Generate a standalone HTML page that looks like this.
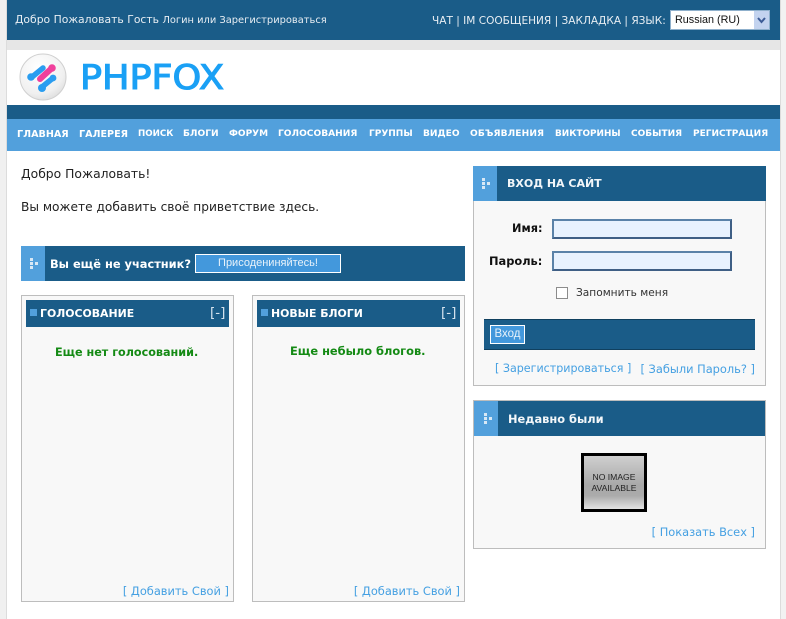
<!DOCTYPE html>
<html><head><meta charset="utf-8"><style>
html,body{margin:0;padding:0;background:#fff}
body{width:786px;height:619px;position:relative;overflow:hidden;font-family:"DejaVu Sans","Liberation Sans",sans-serif;font-size:11px;color:#222}
.a{position:absolute;white-space:nowrap}
.d{background:#1a5c88}
.l{background:#52a0dc}
.box{position:absolute;box-sizing:border-box;background:#f8f8f8;border:1px solid #bdbdbd}
.lnk{color:#45a0e2;font-size:11.4px}
.nav{position:absolute;top:128px;color:#fff;font-weight:bold;font-size:9.1px;white-space:nowrap;line-height:13px}
.top{color:#e8eef3;line-height:12px}
</style></head><body>
<div class="a" style="left:0;top:0;width:6px;height:619px;background:#f0f0f0"></div>
<div class="a" style="left:6px;top:0;width:1px;height:619px;background:#dcdcdc"></div>
<div class="a" style="left:780px;top:0;width:1px;height:619px;background:#dcdcdc"></div>
<div class="a" style="left:781px;top:0;width:5px;height:619px;background:#f2f2f2"></div>
<div class="a d" style="left:7px;top:0;width:773px;height:40px"></div>
<div class="a" style="left:7px;top:40px;width:773px;height:10px;background:#e6e6e6"></div>
<div class="a d" style="left:7px;top:105px;width:773px;height:14px"></div>
<div class="a l" style="left:7px;top:119px;width:773px;height:32px"></div>

<div class="a top" style="left:15px;top:14px;font-size:10.8px">Добро Пожаловать Гость <span style="font-size:9.9px">Логин или Зарегистрироваться</span></div>
<div class="a top" style="left:432px;top:15px;font-size:10.55px">ЧАТ | IM СООБЩЕНИЯ | ЗАКЛАДКА | ЯЗЫК:</div>
<div class="a" style="left:670px;top:10px;width:100px;height:20px;box-sizing:border-box;background:#fff;border:1px solid #8fb0cc;font:10.8px/18px 'Liberation Sans',sans-serif;color:#111;padding-left:4px">Russian (RU)
<svg style="position:absolute;right:0;top:0" width="15" height="18"><rect width="15" height="18" fill="#c3d3ef"/><path d="M4 7l3.5 4 3.5-4" fill="none" stroke="#3d5c96" stroke-width="2"/></svg></div>

<svg class="a" style="left:15px;top:50px" width="215" height="54" viewBox="0 0 215 54">
<defs><radialGradient id="g" cx=".4" cy=".3" r=".8"><stop offset="0" stop-color="#fff"/><stop offset=".7" stop-color="#f0f0f0"/><stop offset="1" stop-color="#d8d8d8"/></radialGradient></defs>
<circle cx="28" cy="27" r="23" fill="url(#g)" stroke="#d0d0d0"/>
<g fill="none" stroke-linecap="round">
<path d="M17 27L28 18" stroke="#2a9df0" stroke-width="5.5"/>
<path d="M27 37L38 28" stroke="#2a9df0" stroke-width="5.5"/>
<path d="M25 29L37 18" stroke="#f0409c" stroke-width="6"/>
</g>
<circle cx="16" cy="27" r="3.8" fill="#2a9df0"/><circle cx="27" cy="38" r="4" fill="#2a9df0"/><circle cx="37" cy="18" r="3.8" fill="#f0409c"/><circle cx="38" cy="28" r="3.4" fill="#2a9df0"/>
<text x="65" y="39" font-family="DejaVu Sans" font-size="34" font-weight="normal" fill="#1aa0f5" stroke="#1aa0f5" stroke-width="1.1" textLength="144" lengthAdjust="spacingAndGlyphs">PHPFOX</text>
</svg>

<span class="nav" style="left:17px;font-size:9.6px">ГЛАВНАЯ</span>
<span class="nav" style="left:79px;font-size:9.6px">ГАЛЕРЕЯ</span>
<span class="nav" style="left:138px;font-size:8.7px">ПОИСК</span>
<span class="nav" style="left:183px">БЛОГИ</span>
<span class="nav" style="left:229px;font-size:9px">ФОРУМ</span>
<span class="nav" style="left:278px">ГОЛОСОВАНИЯ</span>
<span class="nav" style="left:369px;font-size:9px">ГРУППЫ</span>
<span class="nav" style="left:423px">ВИДЕО</span>
<span class="nav" style="left:470px;font-size:9.1px;letter-spacing:.1px">ОБЪЯВЛЕНИЯ</span>
<span class="nav" style="left:555px;font-size:8.9px">ВИКТОРИНЫ</span>
<span class="nav" style="left:631px;font-size:9px">СОБЫТИЯ</span>
<span class="nav" style="left:693px;font-size:9px">РЕГИСТРАЦИЯ</span>

<div class="a" style="left:21px;top:167px;font-size:12.35px;color:#222">Добро Пожаловать!</div>
<div class="a" style="left:21px;top:200px;font-size:12.2px;color:#222">Вы можете добавить своё приветствие здесь.</div>

<div class="a d" style="left:21px;top:246px;width:444px;height:35px"></div>
<div class="a l" style="left:21px;top:246px;width:24px;height:35px"></div>
<svg class="a" style="left:30px;top:258px" width="9" height="12" fill="#d8e8f5"><rect x="0" y="0" width="3" height="3"/><rect x="0" y="4" width="3" height="3"/><rect x="5" y="4" width="3" height="3"/><rect x="0" y="8" width="3" height="3"/></svg>
<div class="a" style="left:50px;top:257px;color:#fff;font-weight:bold;font-size:11.4px">Вы ещё не участник?</div>
<div class="a" style="left:195px;top:254px;width:146px;height:19px;box-sizing:border-box;background:#4398dc;border:1px solid #fff;color:#e8f2fa;text-align:center;font:11px/17px 'Liberation Sans',sans-serif">Присодениняйтесь!</div>

<div class="box" style="left:21px;top:295px;width:213px;height:307px"></div>
<div class="a d" style="left:26px;top:300px;width:203px;height:27px"></div>
<div class="a l" style="left:30px;top:309px;width:7px;height:7px"></div>
<div class="a" style="left:40px;top:307px;color:#fff;font-weight:bold;font-size:10.9px">ГОЛОСОВАНИЕ</div>
<div class="a" style="left:210px;top:305px;color:#d5e3ee;font-size:13.5px">[-]</div>
<div class="a" style="left:55px;top:346px;color:#148a14;font-weight:bold;font-size:11.2px">Еще нет голосований.</div>
<div class="a lnk" style="right:557px;top:584px">[ Добавить Свой ]</div>

<div class="box" style="left:252px;top:295px;width:213px;height:307px"></div>
<div class="a d" style="left:257px;top:300px;width:203px;height:27px"></div>
<div class="a l" style="left:261px;top:309px;width:7px;height:7px"></div>
<div class="a" style="left:271px;top:307px;color:#fff;font-weight:bold;font-size:10.9px">НОВЫЕ БЛОГИ</div>
<div class="a" style="left:441px;top:305px;color:#d5e3ee;font-size:13.5px">[-]</div>
<div class="a" style="left:290px;top:344px;color:#148a14;font-weight:bold;font-size:11.4px">Еще небыло блогов.</div>
<div class="a lnk" style="right:326px;top:584px">[ Добавить Свой ]</div>

<div class="box" style="left:473px;top:166px;width:293px;height:220px"></div>
<div class="a d" style="left:473px;top:166px;width:293px;height:35px"></div>
<div class="a l" style="left:473px;top:166px;width:24px;height:35px"></div>
<svg class="a" style="left:482px;top:178px" width="9" height="12" fill="#d8e8f5"><rect x="0" y="0" width="3" height="3"/><rect x="0" y="4" width="3" height="3"/><rect x="5" y="4" width="3" height="3"/><rect x="0" y="8" width="3" height="3"/></svg>
<div class="a" style="left:507px;top:177px;color:#f2f6f9;font-weight:bold;font-size:11px">ВХОД НА САЙТ</div>

<div class="a" style="left:512px;top:222px;font-weight:bold;font-size:11.3px;color:#111">Имя:</div>
<div class="a" style="left:489px;top:254px;font-weight:bold;font-size:11.4px;color:#111">Пароль:</div>
<div class="a" style="left:552px;top:219px;width:180px;height:20px;box-sizing:border-box;background:#e8f2fe;border:2px solid;border-color:#5a82a8 #3f5f85 #3f5f85 #5a82a8"></div>
<div class="a" style="left:552px;top:251px;width:180px;height:20px;box-sizing:border-box;background:#e8f2fe;border:2px solid;border-color:#5a82a8 #3f5f85 #3f5f85 #5a82a8"></div>
<div class="a" style="left:556px;top:287px;width:12px;height:12px;box-sizing:border-box;background:#fff;border:1px solid #8c8c8c"></div>
<div class="a" style="left:576px;top:287px;font-size:10.6px;color:#333">Запомнить меня</div>
<div class="a d" style="left:484px;top:319px;width:271px;height:31px;border-top:1px solid #10405f;border-bottom:1px solid #10405f;box-sizing:border-box"></div>
<div class="a" style="left:490px;top:325px;width:35px;height:19px;box-sizing:border-box;background:#4398dc;border:1px solid #fff;color:#e8f2fa;text-align:center;font:11.5px/17px 'Liberation Sans',sans-serif">Вход</div>
<div class="a lnk" style="left:495px;top:362px;font-size:11.1px">[ Зарегистрироваться ]</div>
<div class="a lnk" style="right:31px;top:362px">[ Забыли Пароль? ]</div>

<div class="box" style="left:473px;top:400px;width:293px;height:149px"></div>
<div class="a d" style="left:474px;top:401px;width:291px;height:35px"></div>
<div class="a l" style="left:474px;top:401px;width:24px;height:35px"></div>
<svg class="a" style="left:484px;top:413px" width="9" height="12" fill="#d8e8f5"><rect x="0" y="0" width="3" height="3"/><rect x="0" y="4" width="3" height="3"/><rect x="5" y="4" width="3" height="3"/><rect x="0" y="8" width="3" height="3"/></svg>
<div class="a" style="left:508px;top:412px;color:#f2f6f9;font-weight:bold;font-size:11.4px">Недавно были</div>
<div class="a" style="left:581px;top:453px;width:66px;height:59px;box-sizing:border-box;border:3px solid #000;background:linear-gradient(#d0d0d0,#c8c8c8 10%,#a8a8a8 55%,#ababab 75%,#e2e2e2);text-align:center;font:8.6px/10.5px 'Liberation Sans',sans-serif;color:#222;padding-top:16px">NO IMAGE<br>AVAILABLE</div>
<div class="a lnk" style="right:31px;top:525px">[ Показать Всех ]</div>
</body></html>
